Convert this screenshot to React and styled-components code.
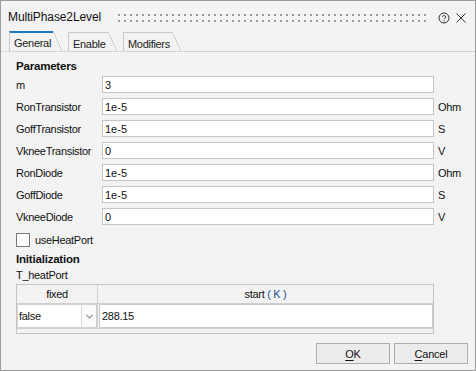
import React from "react";
import styled, { createGlobalStyle } from "styled-components";

const Global = createGlobalStyle`
  html, body {
    margin: 0;
    padding: 0;
    background: #f3f3f3;
  }
  body {
    font-family: "Liberation Sans", Arial, sans-serif;
    color: #1b1b1b;
  }
`;

const Window = styled.div`
  box-sizing: border-box;
  width: 476px;
  height: 371px;
  border: 1px solid #9c9c9c;
  background: #f3f3f3;
  display: flex;
  flex-direction: column;
`;

const TitleBar = styled.div`
  box-sizing: border-box;
  height: 30px;
  display: flex;
  align-items: center;
  padding: 3px 9px 0 7px;
`;

const Title = styled.div`
  font-size: 12px;
  line-height: 15px;
  letter-spacing: -0.1px;
  color: #111;
`;

const Grip = styled.svg`
  margin-left: 17px;
  margin-top: 1px;
`;

const TitleIcon = styled.svg`
  display: block;
`;

const Spacer = styled.div`
  flex: 1;
`;

const TabStrip = styled.div`
  height: 20px;
  display: flex;
  align-items: flex-end;
  padding-left: 8px;
  border-bottom: 1px solid #d6d6d6;
`;

const Tab = styled.div`
  position: relative;
  box-sizing: border-box;
  width: ${(p) => p.w}px;
  height: ${(p) => (p.active ? 20 : 19)}px;
  margin-right: 15px;
  padding: ${(p) => (p.active ? 3 : 4)}px 0 0 4px;
  border-left: 1px solid #c9c9c9;
  border-top: ${(p) => (p.active ? "2px solid #1a78c2" : "1px solid #c9c9c9")};
  font-size: 11px;
  letter-spacing: -0.3px;
  line-height: 14px;
  color: #1b1b1b;

  &::after {
    content: "";
    position: absolute;
    top: ${(p) => (p.active ? -2 : -1)}px;
    left: 100%;
    width: 9px;
    bottom: 0;
    background: linear-gradient(
      to top right,
      transparent calc(50% - 0.7px),
      #c4c4c4 50%,
      transparent calc(50% + 0.7px)
    );
  }
`;

const Panel = styled.div`
  flex: 1;
  padding: 7px 0 0 15px;
  display: flex;
  flex-direction: column;
`;

const Heading = styled.div`
  font-size: 11.5px;
  font-weight: bold;
  line-height: 14px;
  letter-spacing: -0.2px;
  color: #111;
`;

const ParamGrid = styled.div`
  display: grid;
  grid-template-columns: 86px 332px auto;
  row-gap: 5px;
  align-items: center;
  margin-top: 3px;
`;

const Label = styled.div`
  font-size: 11px;
  line-height: 14px;
  letter-spacing: -0.3px;
  padding-top: 1px;
  color: #111;
`;

const Field = styled.input`
  box-sizing: border-box;
  width: 100%;
  height: 17px;
  margin: 0;
  padding: 0 0 0 2px;
  border: 1px solid #c6c6c6;
  background: #fff;
  font-family: "Liberation Sans", Arial, sans-serif;
  font-size: 11px;
  color: #111;
  outline: none;
`;

const Unit = styled.div`
  font-size: 11px;
  line-height: 14px;
  padding-left: 4px;
  padding-top: 1px;
  letter-spacing: -0.3px;
  color: #111;
`;

const CheckRow = styled.label`
  display: flex;
  align-items: center;
  gap: 5px;
  margin-top: 8px;
  height: 14px;
  font-size: 11px;
  letter-spacing: -0.3px;
  color: #111;
`;

const Box = styled.span`
  box-sizing: border-box;
  width: 14px;
  height: 14px;
  border: 1px solid #7a7a7a;
  background: #fff;
`;

const SubHeading = styled(Heading)`
  margin-top: 5px;
`;

const SmallLabel = styled(Label)`
  margin-top: 2px;
  padding-top: 0;
`;

const Table = styled.div`
  box-sizing: border-box;
  width: 418px;
  margin-top: 2px;
  border: 1px solid #c4c4c4;
  background: #f3f3f3;
`;

const HeadRow = styled.div`
  display: grid;
  grid-template-columns: 81px 1fr;
  height: 18px;
  border-bottom: 1px solid #cfcfcf;
`;

const HeadCell = styled.div`
  font-size: 11px;
  letter-spacing: -0.3px;
  line-height: 18px;
  text-align: center;
  color: #111;
  border-right: ${(p) => (p.last ? "none" : "1px solid #cfcfcf")};
`;

const Accent = styled.span`
  color: #24508f;
`;

const BodyRow = styled.div`
  display: grid;
  grid-template-columns: 81px 1fr;
  height: 24px;
  border-bottom: 1px solid #cfcfcf;
`;

const Combo = styled.div`
  display: flex;
  box-sizing: border-box;
  background: #fff;
  border: 1px solid #d2d2d2;
  border-right: 2px solid #cfcfcf;
`;

const ComboText = styled.div`
  flex: 1;
  font-size: 11px;
  letter-spacing: -0.3px;
  line-height: 22px;
  padding-left: 1px;
  color: #111;
  border-right: 1px solid #d8d8d8;
`;

const ComboArrow = styled.div`
  width: 14px;
  display: flex;
  align-items: center;
  justify-content: center;
  background: #fbfbfb;
`;

const ValueCell = styled.div`
  box-sizing: border-box;
  margin-left: 1px;
  background: #fff;
  border: 1px solid #cacaca;
  font-size: 11px;
  letter-spacing: -0.3px;
  line-height: 22px;
  padding-left: 2px;
  color: #111;
`;

const ScrollStrip = styled.div`
  height: 4px;
`;

const Buttons = styled.div`
  display: flex;
  justify-content: flex-end;
  gap: 4px;
  padding: 0 7px 6px 0;
`;

const Button = styled.button`
  box-sizing: border-box;
  width: 74px;
  height: 21px;
  margin: 0;
  padding: 0;
  border: 1px solid #adadad;
  background: #ececec;
  font-family: "Liberation Sans", Arial, sans-serif;
  font-size: 11px;
  letter-spacing: -0.2px;
  color: #111;

  u {
    text-underline-offset: 2px;
  }
`;

const params = [
  ["m", "3", ""],
  ["RonTransistor", "1e-5", "Ohm"],
  ["GoffTransistor", "1e-5", "S"],
  ["VkneeTransistor", "0", "V"],
  ["RonDiode", "1e-5", "Ohm"],
  ["GoffDiode", "1e-5", "S"],
  ["VkneeDiode", "0", "V"],
];

const GripDots = () => (
  <Grip width="310" height="9" viewBox="0 0 310 9">
    <defs>
      <pattern id="dots" width="6" height="6" patternUnits="userSpaceOnUse">
        <rect x="0" y="0" width="2" height="2" fill="#9a9a9a" />
      </pattern>
    </defs>
    <rect x="0" y="0" width="310" height="8" fill="url(#dots)" />
  </Grip>
);

const App = () => {
  return (
    <>
      <Global />
      <Window>
        <TitleBar>
          <Title>MultiPhase2Level</Title>
          <GripDots />
          <Spacer />
          <TitleIcon width="12" height="12" viewBox="0 0 12 12">
            <circle cx="6" cy="6" r="5" fill="none" stroke="#333" strokeWidth="1" />
            <path
              d="M4.4 4.7a1.7 1.7 0 0 1 3.3 0.4c0 1.1-1.6 1.2-1.6 2.3"
              fill="none"
              stroke="#333"
              strokeWidth="1"
            />
            <circle cx="6.1" cy="8.9" r="0.6" fill="#333" />
          </TitleIcon>
          <TitleIcon width="10" height="10" viewBox="0 0 10 10" style={{ marginLeft: 6 }}>
            <path d="M0.5 0.5L9.5 9.5M9.5 0.5L0.5 9.5" stroke="#333" strokeWidth="1" />
          </TitleIcon>
        </TitleBar>
        <TabStrip>
          <Tab active w={44}>General</Tab>
          <Tab w={40}>Enable</Tab>
          <Tab w={49}>Modifiers</Tab>
        </TabStrip>
        <Panel>
          <Heading>Parameters</Heading>
          <ParamGrid>
            {params.map(([name, value, unit]) => (
              <React.Fragment key={name}>
                <Label>{name}</Label>
                <Field readOnly value={value} />
                <Unit>{unit}</Unit>
              </React.Fragment>
            ))}
          </ParamGrid>
          <CheckRow>
            <Box />
            useHeatPort
          </CheckRow>
          <SubHeading>Initialization</SubHeading>
          <SmallLabel>T_heatPort</SmallLabel>
          <Table>
            <HeadRow>
              <HeadCell>fixed</HeadCell>
              <HeadCell last>
                start <Accent>( K )</Accent>
              </HeadCell>
            </HeadRow>
            <BodyRow>
              <Combo>
                <ComboText>false</ComboText>
                <ComboArrow>
                  <svg width="7" height="5" viewBox="0 0 7 5">
                    <path d="M0.5 1L3.5 4L6.5 1" fill="none" stroke="#9a9a9a" strokeWidth="1.2" />
                  </svg>
                </ComboArrow>
              </Combo>
              <ValueCell>288.15</ValueCell>
            </BodyRow>
            <ScrollStrip />
          </Table>
        </Panel>
        <Buttons>
          <Button>
            <u>O</u>K
          </Button>
          <Button>
            <u>C</u>ancel
          </Button>
        </Buttons>
      </Window>
    </>
  );
};

export default App;
